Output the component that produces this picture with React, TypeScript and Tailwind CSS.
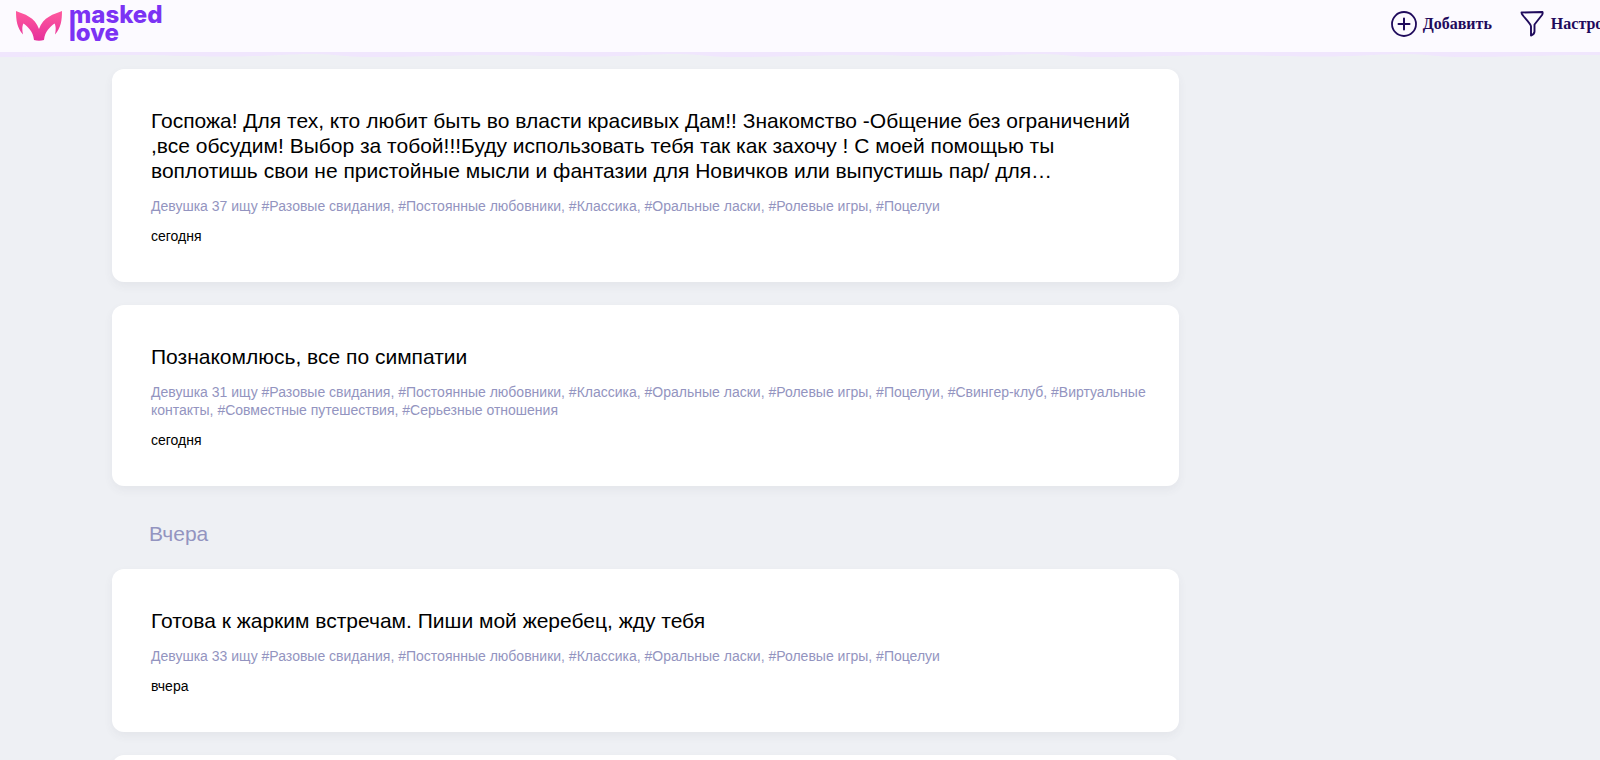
import { ReactNode } from "react";

const posts = {
  today: [
    {
      id: 1,
      text: "Госпожа! Для тех, кто любит быть во власти красивых Дам!! Знакомство -Общение без ограничений ,все обсудим! Выбор за тобой!!!Буду использовать тебя так как захочу ! С моей помощью ты воплотишь свои не пристойные мысли и фантазии для Новичков или выпустишь пар/ для…",
      tags: "Девушка 37 ищу #Разовые свидания, #Постоянные любовники, #Классика, #Оральные ласки, #Ролевые игры, #Поцелуи",
      date: "сегодня",
    },
    {
      id: 2,
      text: "Познакомлюсь, все по симпатии",
      tags: "Девушка 31 ищу #Разовые свидания, #Постоянные любовники, #Классика, #Оральные ласки, #Ролевые игры, #Поцелуи, #Свингер-клуб, #Виртуальные контакты, #Совместные путешествия, #Серьезные отношения",
      date: "сегодня",
    },
  ],
  yesterday: [
    {
      id: 3,
      text: "Готова к жарким встречам. Пиши мой жеребец, жду тебя",
      tags: "Девушка 33 ищу #Разовые свидания, #Постоянные любовники, #Классика, #Оральные ласки, #Ролевые игры, #Поцелуи",
      date: "вчера",
    },
  ],
};

function Card({ children }: { children?: ReactNode }) {
  return (
    <article className="min-h-20 rounded-xl bg-white pt-[39px] pr-6 pb-[37px] pl-[39px] shadow-[0_4px_10px_rgba(60,60,80,0.06)]">
      {children}
    </article>
  );
}

function Post({ text, tags, date }: { text: string; tags: string; date: string }) {
  return (
    <Card>
      <p className="line-clamp-3 text-[21px] leading-[25px] text-black">{text}</p>
      <p className="mt-3.5 text-sm leading-[18px] text-[#9394c0]">{tags}</p>
      <p className="mt-3 text-sm leading-[18px] text-black">{date}</p>
    </Card>
  );
}

function Logo() {
  return (
    <a href="#" className="flex items-center gap-[7px]">
      <svg className="mt-1" width="46" height="30" viewBox="0 0 46 30" aria-hidden="true">
        <defs>
          <linearGradient id="mask" x1="0" y1="0" x2="0" y2="1">
            <stop offset="0" stopColor="#ff5a9d" />
            <stop offset="1" stopColor="#e62f9b" />
          </linearGradient>
        </defs>
        <path
          fill="url(#mask)"
          d="M0 0C8 3 19 6 23 18C27 6 38 3 46 0C46 9 45 17 39 23.500C40 19 40 15 38.500 12.500C34 16 29 20 28 29Q23 30.500 18 29C17 20 12 16 7.500 12.500C6 15 6 19 7 23.500C1 17 0 9 0 0Z"
        />
      </svg>
      <span className="font-['Inter',sans-serif] text-2xl/[18px] font-extrabold text-[#7b33f4]">
        masked
        <br />
        love
      </span>
    </a>
  );
}

function Wave() {
  return (
    <svg className="block h-[5px] w-full" aria-hidden="true">
      <defs>
        <pattern id="wave" width="364" height="5" patternUnits="userSpaceOnUse">
          <path fill="#f0e6fd" d="M0 0H364V5C345 5 335 2 315 2C285 2 270 4.500 225 4.500C180 4.500 165 3 130 3C90 3 60 5 0 5Z" />
        </pattern>
      </defs>
      <rect width="100%" height="5" fill="url(#wave)" />
    </svg>
  );
}

export default function App() {
  return (
    <div className="h-screen overflow-hidden bg-[#eef0f4] font-['Liberation_Sans',Arial,sans-serif]">
      <header className="overflow-hidden">
        <div className="flex justify-between bg-[#fcfaff] pt-1.5 pb-2.5 pl-4">
          <Logo />

          <nav className="-mr-[31px] flex h-9 items-center gap-7 font-['Liberation_Serif',serif] text-base font-bold text-[#1f0a5c]">
            <button className="flex items-center gap-1.5">
              <svg width="26" height="26" viewBox="0 0 26 26" fill="none" stroke="currentColor" strokeWidth="1.8" strokeLinecap="round">
                <circle cx="13" cy="13" r="12" />
                <path d="M13 7.500v11M7.500 13h11" strokeWidth="2" />
              </svg>
              Добавить
            </button>
            <button className="flex items-center gap-[7px]">
              <svg width="24" height="26" viewBox="0 0 24 26" fill="none" stroke="currentColor" strokeWidth="1.900" strokeLinejoin="round">
                <path d="M1.500 1.500L22.500 1Q23 2.500 22 4L14.500 13.500V20.500C14.500 22.500 12.500 24 11 24.500V15.500C11 13 5.500 8 3 4.500Q1.500 3 1.500 1.500Z" />
              </svg>
              Настройки
            </button>
          </nav>
        </div>
        <Wave />
      </header>

      <main className="mt-3 ml-28 flex w-2/3 flex-col gap-[23px]">
        {posts.today.map((post) => (
          <Post key={post.id} {...post} />
        ))}

        <h2 className="mt-[13px] px-[37px] text-[21px] leading-6 text-[#9394c0]">Вчера</h2>

        {posts.yesterday.map((post) => (
          <Post key={post.id} {...post} />
        ))}
        <Card />
      </main>
    </div>
  );
}
